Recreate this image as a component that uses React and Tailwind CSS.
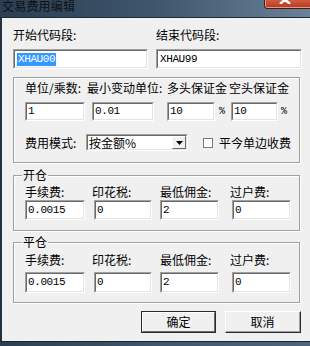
const cjk = "font-['Noto_Sans_CJK_SC','Noto_Sans',sans-serif]";

function Field({ w, h, children }) {
  return (
    <div className={`${w} ${h} border-t border-l border-t-[#a0a0a0] border-l-[#a0a0a0] border-b border-r border-b-white border-r-white`}>
      <div className="h-full w-full bg-white border-t border-l border-t-[#696969] border-l-[#696969] border-b border-r border-b-[#e3e3e3] border-r-[#e3e3e3] flex items-center pl-[1px] font-['Liberation_Mono',monospace] text-[11px] tracking-[-0.4px] text-black leading-none overflow-hidden">
        {children}
      </div>
    </div>
  );
}

function Group({ label, className, children }) {
  return (
    <div className={`relative w-[287px] border border-[#a0a0a0] shadow-[inset_1px_1px_0_#fff,1px_1px_0_#fff] ${className}`}>
      {label && (
        <span className="absolute left-[8px] top-[-7px] bg-[#f0f0f0] px-[1px] leading-[12px] text-[12px]">
          {label}
        </span>
      )}
      {children}
    </div>
  );
}

function FeeRows({ inputH }) {
  return (
    <>
      <div className="flex leading-[12px] text-[12px] whitespace-nowrap">
        <span className="w-[67px]">手续费:</span>
        <span className="w-[68px]">印花税:</span>
        <span className="w-[70px]">最低佣金:</span>
        <span>过户费:</span>
      </div>
      <div className={`flex ${inputH === 'h-[21px]' ? 'mt-[6px]' : 'mt-[2px]'}`}>
        <Field w="w-[60px]" h={inputH}>0.0015</Field>
        <div className="ml-[9px]"><Field w="w-[58px]" h={inputH}>0</Field></div>
        <div className="ml-[8px]"><Field w="w-[59px]" h={inputH}>2</Field></div>
        <div className="ml-[13px]"><Field w="w-[59px]" h={inputH}>0</Field></div>
      </div>
    </>
  );
}

export default function App() {
  return (
    <div className={`w-[310px] h-[346px] overflow-hidden flex flex-col bg-[#3b5066] ${cjk} text-black`}>
      {/* title bar */}
      <div className="relative h-[17px] bg-gradient-to-r from-[#2c3e51] via-[#3f566d] to-[#6a8299] flex items-end">
        <span className="pl-[2px] text-[12px] leading-[12px] mb-[5px] text-[#0d1218] tracking-[0.2px]">交易费用编辑</span>
        <div className="absolute right-[-6px] top-[-4px] w-[52px] h-[13px] rounded-b-[3px] border border-[#4a1a12] bg-gradient-to-b from-[#d8694f] to-[#b8361f] shadow-[inset_0_0_0_1px_#e59a83] flex justify-center items-end">
          <svg width="12" height="9" viewBox="0 0 12 9" className="mb-[4px] ml-[-10px]">
            <path d="M1 0 L11 9 M11 0 L1 9" stroke="#fff" strokeWidth="2.4" />
          </svg>
        </div>
      </div>
      <div className="h-[1px] bg-[#1e2a36]" />
      {/* body */}
      <div className="flex-1 bg-[#f0f0f0] border-l-2 border-l-[#25323f] pl-[11px] flex flex-col">
        <div className="mt-[11px] flex gap-[8px] text-[12px]">
          <div className="w-[135px] flex flex-col">
            <span className="leading-[12px]">开始代码段:</span>
            <div className="mt-[8px]">
              <Field w="w-[135px]" h="h-[20px]">
                <span className="bg-[#3399ff] text-white px-[1px] py-[1px] ml-[1px]">XHAU00</span>
              </Field>
            </div>
          </div>
          <div className="w-[146px] flex flex-col">
            <span className="leading-[12px]">结束代码段:</span>
            <div className="mt-[8px]">
              <Field w="w-[146px]" h="h-[20px]">
                <span className="ml-[1px]">XHAU99</span>
              </Field>
            </div>
          </div>
        </div>

        <Group className="mt-[8px] h-[86px] pt-[4px] pl-[11px]">
          <div className="flex leading-[12px] text-[12px] whitespace-nowrap">
            <span className="w-[62px]">单位/乘数:</span>
            <span className="w-[80px]">最小变动单位:</span>
            <span className="w-[62px]">多头保证金</span>
            <span>空头保证金</span>
          </div>
          <div className="flex items-center mt-[8px]">
            <Field w="w-[60px]" h="h-[19px]">1</Field>
            <div className="ml-[7px]"><Field w="w-[62px]" h="h-[19px]">0.01</Field></div>
            <div className="ml-[13px]"><Field w="w-[48px]" h="h-[19px]">10</Field></div>
            <span className="ml-[4px] w-[12px] text-[10px] font-['Liberation_Mono',monospace]">%</span>
            <div><Field w="w-[47px]" h="h-[19px]">10</Field></div>
            <span className="ml-[3px] text-[10px] font-['Liberation_Mono',monospace]">%</span>
          </div>
          <div className="flex items-center mt-[13px]">
            <span className="w-[61px] text-[12px] leading-[12px]">费用模式:</span>
            <div className="w-[102px] h-[17px] border-t border-l border-t-[#a0a0a0] border-l-[#a0a0a0] border-b border-r border-b-white border-r-white">
              <div className="h-full bg-white border-t border-l border-t-[#696969] border-l-[#696969] border-b border-r border-b-[#e3e3e3] border-r-[#e3e3e3] flex items-center">
                <span className="flex-1 text-[12px] leading-[12px] pl-[1px] whitespace-nowrap">按金额%</span>
                <div className="w-[14px] h-full bg-[#f0f0f0] border-t border-l border-t-white border-l-white border-b border-r border-b-[#696969] border-r-[#696969] flex items-center justify-center">
                  <svg width="7" height="4" viewBox="0 0 7 4"><path d="M0 0 H7 L3.5 4 Z" fill="#000" /></svg>
                </div>
              </div>
            </div>
            <div className="ml-[15px] w-[10px] h-[10px] bg-white border border-[#7a7a7a]" />
            <span className="ml-[6px] text-[12px] leading-[12px]">平今单边收费</span>
          </div>
        </Group>

        <Group label="开仓" className="mt-[12px] h-[56px] pt-[10px] pl-[11px]">
          <FeeRows inputH="h-[20px]" />
        </Group>

        <Group label="平仓" className="mt-[11px] h-[61px] pt-[11px] pl-[11px]">
          <FeeRows inputH="h-[21px]" />
        </Group>

        <div className="mt-[8px] flex justify-end pr-[9px] gap-[9px] text-[12px]">
          <div className="w-[75px] h-[22px] border border-[#2b2b2b]">
            <div className="h-full border-t border-l border-t-white border-l-white border-b border-r border-b-[#696969] border-r-[#696969] bg-[#f0f0f0] flex items-center justify-center leading-[12px]">确定</div>
          </div>
          <div className="w-[76px] h-[22px] border-t border-l border-t-white border-l-white border-b border-r border-b-[#2b2b2b] border-r-[#2b2b2b]">
            <div className="h-full border-b border-r border-b-[#a0a0a0] border-r-[#a0a0a0] bg-[#f0f0f0] flex items-center justify-center leading-[12px]">取消</div>
          </div>
        </div>
      </div>
      <div className="h-[5px] border-t border-t-[#1b2530] bg-gradient-to-r from-[#2c3e51] via-[#3f566d] to-[#4e667d]" />
    </div>
  );
}
